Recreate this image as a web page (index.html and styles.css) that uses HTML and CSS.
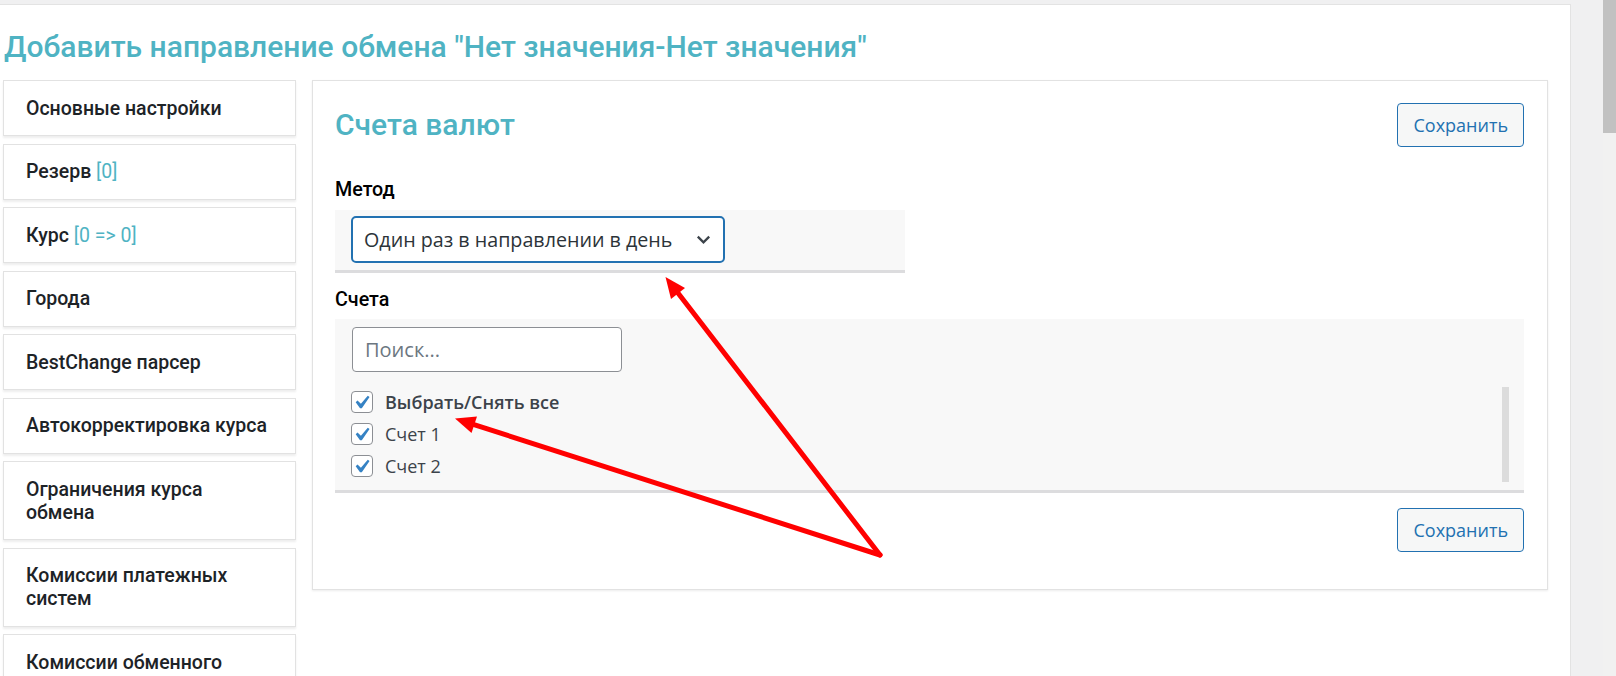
FILE: index.html
```html
<!DOCTYPE html>
<html lang="ru">
<head>
<meta charset="utf-8">
<title>Добавить направление обмена</title>
<link rel="stylesheet" href="styles.css">
</head>
<body>
<div class="wrap">
  <h1 class="title">Добавить направление обмена "Нет значения-Нет значения"</h1>
  <div class="layout">
    <nav class="side">
      <div class="tab">Основные настройки</div>
      <div class="tab">Резерв <span class="hint">[0]</span></div>
      <div class="tab">Курс <span class="hint">[0 =&gt; 0]</span></div>
      <div class="tab">Города</div>
      <div class="tab">BestChange парсер</div>
      <div class="tab">Автокорректировка курса</div>
      <div class="tab">Ограничения курса обмена</div>
      <div class="tab">Комиссии платежных систем</div>
      <div class="tab">Комиссии обменного пункта</div>
    </nav>
    <section class="panel">
      <div class="panel-head">
        <h2 class="panel-title">Счета валют</h2>
        <button class="btn" type="button">Сохранить</button>
      </div>
      <div class="field-label lbl-method">Метод</div>
      <div class="select-wrap">
        <div class="select">
          <span>Один раз в направлении в день</span>
          <svg class="chev" viewBox="0 0 20 20" aria-hidden="true"><path d="M4 7l6 6 6-6" fill="none" stroke="#3c434a" stroke-width="2.4"/></svg>
        </div>
      </div>
      <div class="field-label lbl-acc">Счета</div>
      <div class="acc-box">
        <input class="search" type="text" placeholder="Поиск...">
        <div class="acc-list">
          <div class="acc-items">
            <label class="acc-row all"><span class="cb"><svg viewBox="3 2 15 15" aria-hidden="true"><path d="M14.83 4.89l1.34.94-5.81 8.38H9.02L5.78 9.67l1.34-1.25 2.57 2.4z" fill="#3582c4"/></svg></span>Выбрать/Снять все</label>
            <label class="acc-row"><span class="cb"><svg viewBox="3 2 15 15" aria-hidden="true"><path d="M14.83 4.89l1.34.94-5.81 8.38H9.02L5.78 9.67l1.34-1.25 2.57 2.4z" fill="#3582c4"/></svg></span>Счет 1</label>
            <label class="acc-row"><span class="cb"><svg viewBox="3 2 15 15" aria-hidden="true"><path d="M14.83 4.89l1.34.94-5.81 8.38H9.02L5.78 9.67l1.34-1.25 2.57 2.4z" fill="#3582c4"/></svg></span>Счет 2</label>
          </div>
          <div class="acc-track"></div>
        </div>
      </div>
      <div class="panel-foot">
        <button class="btn" type="button">Сохранить</button>
      </div>
    </section>
  </div>
</div>
<div class="vscroll"><div class="thumb"></div></div>
<svg class="annot" viewBox="0 0 1616 676" aria-hidden="true">
  <line x1="880" y1="555" x2="678" y2="293" stroke="#ff0000" stroke-width="5" stroke-linecap="round"/>
  <polygon points="665.5,277 685,288 671,299" fill="#ff0000"/>
  <line x1="880" y1="555" x2="474" y2="424.6" stroke="#ff0000" stroke-width="5" stroke-linecap="round"/>
  <polygon points="455,418.5 477,416.5 471.5,433" fill="#ff0000"/>
</svg>
</body>
</html>
```
FILE: styles.css
```css
html, body {
  margin: 0;
  padding: 0;
}
body {
  background: #f0f0f1;
  display: flex;
  height: 676px;
  overflow: hidden;
  position: relative;
}
.wrap {
  flex: 1;
  min-width: 0;
  background: #fff;
  margin-top: 4px;
  margin-right: 32px;
  border-top: 1px solid #e3e3e3;
  border-right: 1px solid #e3e3e3;
  padding: 0 22px 0 3px;
}
.vscroll {
  width: 13px;
  flex: none;
  background: #f1f1f1;
}
.thumb {
  height: 133px;
  background: #c1c1c1;
}
.title {
  margin: 24px 0 15px 1px;
  font: 500 30px/36px "Roboto", sans-serif;
  color: #4fb3c3;
  white-space: nowrap;
}
.layout {
  display: flex;
  gap: 16px;
  align-items: flex-start;
}
.side {
  width: 293px;
  flex: none;
}
.tab {
  background: #fff;
  border: 1px solid #e2e2e2;
  box-shadow: 0 2px 2px rgba(0, 0, 0, 0.07);
  padding: 15.5px 23px 15.5px 22px;
  margin-bottom: 7.5px;
  font: 500 19.5px/23px "Roboto", sans-serif;
  color: #1d2327;
}
.hint {
  color: #4fb3c3;
  font-weight: 400;
}
.panel {
  flex: 1;
  min-width: 0;
  background: #fff;
  border: 1px solid #e2e2e2;
  box-shadow: 0 1px 2px rgba(0, 0, 0, 0.08);
  padding: 22px 23px 37px 22px;
}
.panel-head {
  display: flex;
  justify-content: space-between;
  align-items: center;
  height: 44px;
}
.panel-title {
  margin: 0;
  font: 500 30px/36px "Roboto", sans-serif;
  color: #4fb3c3;
}
.btn {
  height: 44px;
  padding: 0 15px;
  border: 1px solid #2271b1;
  border-radius: 4px;
  background: #f6f7f7;
  color: #2271b1;
  font: 400 18px "Open Sans", sans-serif;
  cursor: pointer;
}
.field-label {
  font: 500 19.7px/24px "Roboto", sans-serif;
  color: #000;
}
.lbl-method {
  margin: 31px 0 8px;
}
.lbl-acc {
  margin: 15px 0 7px;
}
.select-wrap {
  width: 570px;
  box-sizing: border-box;
  background: #f8f8f8;
  border-bottom: 3px solid #dcdcde;
  padding: 6px 0 7px 16px;
}
.select {
  width: 374px;
  height: 47px;
  box-sizing: border-box;
  border: 2px solid #2271b1;
  border-radius: 5px;
  background: #fff;
  display: flex;
  align-items: center;
  justify-content: space-between;
  padding: 0 10px 0 11px;
  font: 400 19.7px "Open Sans", sans-serif;
  color: #2c3338;
}
.chev {
  width: 19px;
  height: 19px;
  flex: none;
}
.acc-box {
  background: #f8f8f8;
  border-bottom: 3px solid #dcdcde;
  padding: 8px 15px 0 17px;
}
.search {
  display: block;
  width: 270px;
  height: 45px;
  box-sizing: border-box;
  border: 1px solid #8c8f94;
  border-radius: 4px;
  padding: 0 12px;
  background: #fff;
  color: #2c3338;
  font: 400 20px "Open Sans", sans-serif;
  outline: none;
}
.search::placeholder {
  color: #6c7781;
}
.acc-list {
  display: flex;
  margin-top: 8px;
  height: 110px;
}
.acc-items {
  flex: 1;
  padding-top: 6px;
  margin-left: -1px;
}
.acc-row {
  display: flex;
  align-items: center;
  height: 32px;
  font: 400 18px "Open Sans", sans-serif;
  color: #3c434a;
}
.acc-row.all {
  font-weight: 600;
}
.cb {
  width: 22px;
  height: 22px;
  box-sizing: border-box;
  border: 1px solid #8c8f94;
  border-radius: 4px;
  background: #fff;
  margin-right: 12px;
  flex: none;
  display: flex;
}
.cb svg {
  width: 100%;
  height: 100%;
}
.acc-track {
  width: 7px;
  flex: none;
  background: #dcdcdc;
  margin: 7px 0 8px;
}
.panel-foot {
  display: flex;
  justify-content: flex-end;
  margin-top: 15px;
}
.annot {
  position: absolute;
  left: 0;
  top: 0;
  width: 1616px;
  height: 676px;
  pointer-events: none;
}
```
